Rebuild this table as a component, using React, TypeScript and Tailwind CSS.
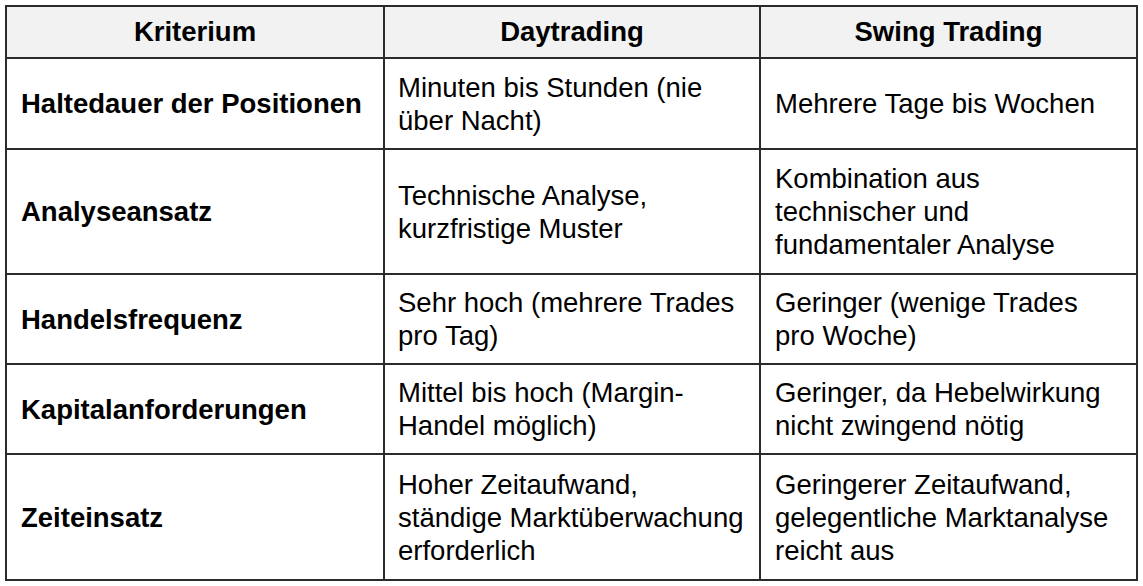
const rows: [string, string, string][] = [
  ["Haltedauer der Positionen", "Minuten bis Stunden (nie über Nacht)", "Mehrere Tage bis Wochen"],
  ["Analyseansatz", "Technische Analyse, kurzfristige Muster", "Kombination aus technischer und fundamentaler Analyse"],
  ["Handelsfrequenz", "Sehr hoch (mehrere Trades pro Tag)", "Geringer (wenige Trades pro Woche)"],
  ["Kapitalanforderungen", "Mittel bis hoch (Margin-Handel möglich)", "Geringer, da Hebelwirkung nicht zwingend nötig"],
  ["Zeiteinsatz", "Hoher Zeitaufwand, ständige Marktüberwachung erforderlich", "Geringerer Zeitaufwand, gelegentliche Marktanalyse reicht aus"],
];

const heights = ["h-[91px]", "h-[125px]", "h-[90px]", "h-[90px]", "h-[126px]"];

export default function App() {
  return (
    <div className="min-h-screen bg-white pl-[5px] pt-[5px] font-['Liberation_Sans',Arial,sans-serif] text-[27.5px] leading-[33px] text-black">
      <table className="w-[1131px] table-fixed border-collapse border-2 border-[#2b2b2b]">
        <colgroup>
          <col className="w-[378px]" />
          <col className="w-[376px]" />
          <col className="w-[377px]" />
        </colgroup>
        <thead>
          <tr className="h-[52px] bg-[#f2f2f2]">
            {["Kriterium", "Daytrading", "Swing Trading"].map((h) => (
              <th key={h} className="border-2 border-[#2b2b2b] pb-[2px] text-center font-bold">
                {h}
              </th>
            ))}
          </tr>
        </thead>
        <tbody>
          {rows.map((r, i) => (
            <tr key={r[0]} className={heights[i]}>
              <td className="border-2 border-[#2b2b2b] pl-[14px] pr-[16px] align-middle font-bold">{r[0]}</td>
              <td className="border-2 border-[#2b2b2b] pl-[13px] pr-[12px] align-middle">{r[1]}</td>
              <td className="border-2 border-[#2b2b2b] pl-[14px] pr-[16px] align-middle">{r[2]}</td>
            </tr>
          ))}
        </tbody>
      </table>
    </div>
  );
}
